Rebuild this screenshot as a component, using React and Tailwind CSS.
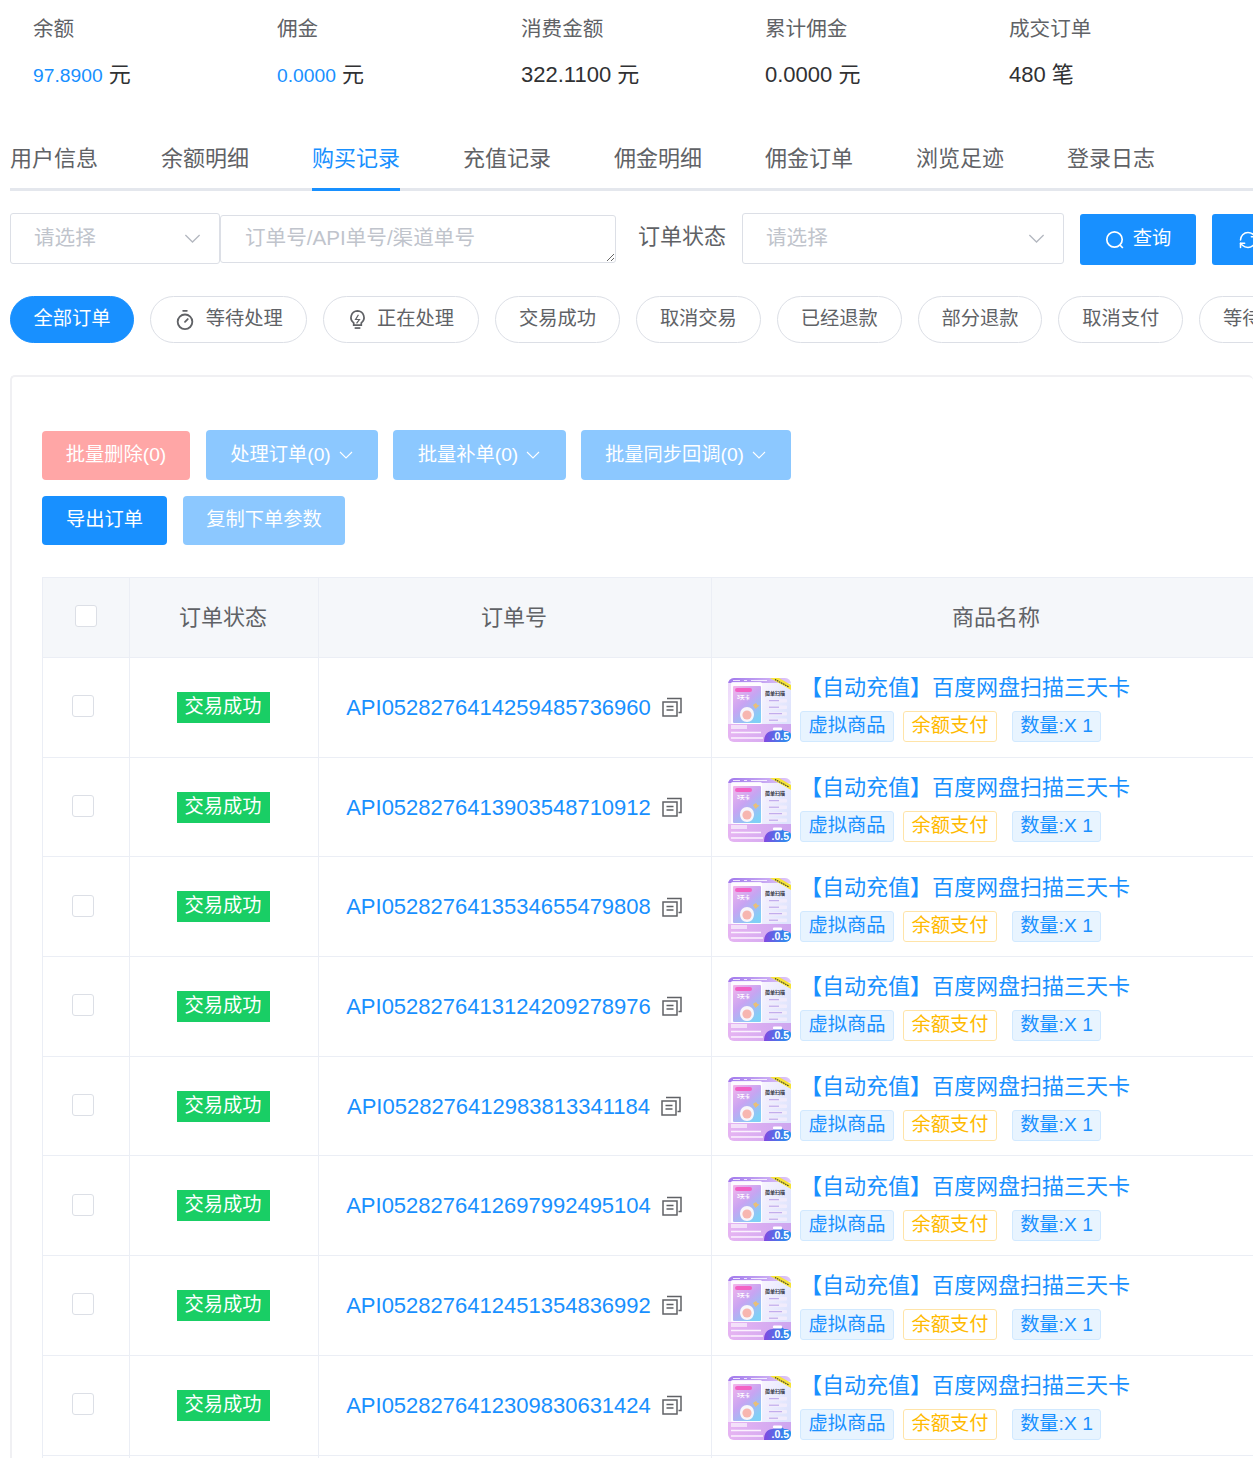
import { Timer, RefreshCw } from "lucide-react";

const stats = [
  { label: "余额", value: "97.8900", unit: "元", blue: true },
  { label: "佣金", value: "0.0000", unit: "元", blue: true },
  { label: "消费金额", value: "322.1100", unit: "元" },
  { label: "累计佣金", value: "0.0000", unit: "元" },
  { label: "成交订单", value: "480", unit: "笔" },
];

const tabs = ["用户信息", "余额明细", "购买记录", "充值记录", "佣金明细", "佣金订单", "浏览足迹", "登录日志"];

const pills = [
  { name: "全部订单", w: "w-[124px]", active: true },
  { name: "等待处理", w: "w-[156.6px]", icon: "timer" },
  { name: "正在处理", w: "w-[156.6px]", icon: "bulb" },
  { name: "交易成功", w: "w-[124.8px]" },
  { name: "取消交易", w: "w-[124.8px]" },
  { name: "已经退款", w: "w-[124.8px]" },
  { name: "部分退款", w: "w-[124.8px]" },
  { name: "取消支付", w: "w-[124.8px]" },
  { name: "等待支付", w: "w-[124.8px]" },
];

const orders = [
  "API0528276414259485736960",
  "API0528276413903548710912",
  "API0528276413534655479808",
  "API0528276413124209278976",
  "API0528276412983813341184",
  "API0528276412697992495104",
  "API0528276412451354836992",
  "API0528276412309830631424",
];

function Chevron({ className }) {
  return (
    <svg viewBox="0 0 16 16" fill="none" stroke="currentColor" strokeWidth="1.1" className={className}>
      <path d="M2 5l6 6 6-6" />
    </svg>
  );
}

function SelectBox({ w }) {
  return (
    <div className={`flex h-[51px] shrink-0 items-center justify-between rounded-[3px] border border-[#dcdfe6] bg-white pl-[23px] pr-[17px] text-[20.6px] text-[#c0c4cc] ${w}`}>
      <span>请选择</span>
      <Chevron className="h-[19px] w-[19px] text-[#b4b8c0]" />
    </div>
  );
}

function SearchIcon() {
  return (
    <svg viewBox="0 0 20 20" fill="none" stroke="currentColor" strokeWidth="1.7" className="h-5 w-5">
      <circle cx="9.5" cy="9.5" r="7.7" />
      <path d="M15 15l2.8 3" />
    </svg>
  );
}

function BulbIcon() {
  return (
    <svg viewBox="0 0 20 22" fill="none" stroke="#606266" strokeWidth="1.8" className="h-[21px] w-[19px]">
      <path d="M10 2a7 7 0 0 0-4 12.6V17h8v-2.4A7 7 0 0 0 10 2z" />
      <path d="M7 20h6" />
      <path d="M11 6l-3 5h4l-3 4" strokeWidth="1.3" />
    </svg>
  );
}

function CopyIcon() {
  return (
    <svg viewBox="0 0 20 20" fill="none" stroke="#606266" strokeWidth="1.5" className="h-5 w-5 shrink-0">
      <path d="M5 1.5h14v14h-2.5" />
      <rect x="1" y="5" width="14" height="14" />
      <path d="M4.5 9.5h7M4.5 13h7" />
    </svg>
  );
}

// 商品缩略图
function Thumb({ uid }) {
  return (
    <svg viewBox="0 0 63 64" className="h-16 w-[63px] shrink-0 rounded-[6px]">
      <defs>
        <linearGradient id={`bg${uid}`} x1="0" y1="0" x2="1" y2="0.4">
          <stop offset="0" stopColor="#ecd6fa" />
          <stop offset="0.5" stopColor="#f8f4fe" />
          <stop offset="1" stopColor="#dfe4fd" />
        </linearGradient>
        <linearGradient id={`top${uid}`} x1="0" y1="0" x2="1" y2="0">
          <stop offset="0" stopColor="#a078ec" />
          <stop offset="1" stopColor="#e2c8f8" />
        </linearGradient>
        <linearGradient id={`card${uid}`} x1="0" y1="0" x2="0.7" y2="1">
          <stop offset="0" stopColor="#f4b4ea" />
          <stop offset="0.5" stopColor="#c8a4f2" />
          <stop offset="1" stopColor="#7fd0f6" />
        </linearGradient>
        <linearGradient id={`foot${uid}`} x1="0" y1="0" x2="1" y2="0">
          <stop offset="0" stopColor="#e6b4f2" />
          <stop offset="1" stopColor="#cda6f0" />
        </linearGradient>
        <linearGradient id={`price${uid}`} x1="0" y1="0" x2="1" y2="0">
          <stop offset="0" stopColor="#8248e0" />
          <stop offset="1" stopColor="#1c9af0" />
        </linearGradient>
      </defs>
      <rect width="63" height="64" fill={`url(#bg${uid})`} />
      <rect width="63" height="5" fill={`url(#top${uid})`} />
      <path d="M5 2.5h7M16 2.5h3M23 2.5h16" stroke="#fff" strokeWidth="1" opacity="0.8" />
      <path d="M42 0h9l12 7v5z" fill="#f6e437" />
      <path d="M47 1.5l14 7.5" stroke="#333" strokeWidth="1.1" strokeDasharray="1.5 0.8" />
      <rect x="3" y="4" width="31" height="42" rx="1.5" fill="#fff" opacity="0.85" />
      <rect x="5" y="8" width="28" height="37" rx="1" fill={`url(#card${uid})`} />
      <rect x="7" y="10" width="17" height="4" rx="2" fill="#f261c4" />
      <text x="9" y="21" fontSize="5" fontWeight="700" fill="#fff">3天卡</text>
      <path d="M12 36a7 7 0 0 1 14 0c0 5-3 8-7 8s-7-3-7-8z" fill="#f7f6fb" />
      <circle cx="19" cy="37" r="4.6" fill="#f7b6b0" />
      <path d="M25 27l3-2 1.5 2 2 .5-2.5 2-1.5 1.5z" fill="#e8bf78" />
      <text x="37" y="17" fontSize="5" fontWeight="700" fill="#2e2e3a">简单扫描</text>
      <rect x="38" y="21" width="21" height="3.5" rx="1" fill="#f1ecfc" />
      <rect x="38" y="27.5" width="21" height="3.5" rx="1" fill="#f1ecfc" />
      <rect x="38" y="34" width="21" height="3.5" rx="1" fill="#f1ecfc" />
      <rect x="38" y="40.5" width="21" height="3.5" rx="1" fill="#f1ecfc" />
      <path d="M41 22.7h10M41 29.2h10M41 35.7h13M41 42.2h9" stroke="#a78ae4" strokeWidth="0.8" />
      <rect x="0" y="46" width="63" height="18" fill={`url(#foot${uid})`} />
      <rect x="3" y="47" width="16" height="4" fill="#fff" opacity="0.6" />
      <path d="M3 54.5h30M3 60h32" stroke="#fbf2fe" strokeWidth="1.6" />
      <path d="M36 64c0-7 3-11 9-11 2-3 9-3 11 0 4 0 7 1 7 4v7z" fill={`url(#price${uid})`} />
      <rect x="45" y="49.5" width="9" height="3" rx="1" fill="#fff" />
      <text x="43.5" y="62" fontSize="10.5" fontWeight="700" fill="#fff">.0.5</text>
    </svg>
  );
}

function Row({ id }) {
  return (
    <div className="flex h-[99.7px] border-b border-[#ebeef5]">
      <div className="flex w-[87px] shrink-0 items-center justify-center border-r border-[#ebeef5] pr-[6px]">
        <span className="mb-[2px] h-[22px] w-[22px] rounded-[3px] border border-[#dcdfe6] bg-white" />
      </div>
      <div className="flex w-[189px] shrink-0 items-center justify-center border-r border-[#ebeef5] pr-[2px]">
        <span className="flex h-[31px] w-[93px] items-center justify-center bg-[#19ce65] text-[19.25px] text-white">交易成功</span>
      </div>
      <div className="flex w-[393px] shrink-0 items-center justify-center gap-[11px] border-r border-[#ebeef5] pr-[2px] text-[22px] text-[#1890ff]">
        <span>{id}</span>
        <CopyIcon />
      </div>
      <div className="flex flex-1 items-center gap-[9px] pl-4 pt-[6px]">
        <Thumb uid={id} />
        <div className="flex flex-col gap-[13px]">
          <div className="text-[22px] leading-[20px] text-[#1890ff]">【自动充值】百度网盘扫描三天卡</div>
          <div className="flex text-[19.25px]">
            <span className="flex h-[31px] w-[94px] items-center justify-center rounded-[3px] border border-[#d1e9ff] bg-[#e8f4ff] text-[#1890ff]">虚拟商品</span>
            <span className="ml-[9px] flex h-[31px] w-[94px] items-center justify-center rounded-[3px] border border-[#ffe4a8] bg-white text-[#ffba00]">余额支付</span>
            <span className="ml-[15px] flex h-[31px] w-[89px] items-center justify-center rounded-[3px] border border-[#d1e9ff] bg-[#e8f4ff] text-[#1890ff]">数量:X 1</span>
          </div>
        </div>
      </div>
    </div>
  );
}

export default function App() {
  return (
    <div className="h-[1458px] w-[1253px] overflow-hidden bg-white font-['Liberation_Sans','Noto_Sans_CJK_SC',sans-serif]">
      {/* 顶部统计 */}
      <div className="flex pl-[33px] pt-[14px]">
        {stats.map((s) => (
          <div key={s.label} className="w-[244px]">
            <div className="text-[20.6px] leading-[29px] text-[#606266]">{s.label}</div>
            <div className="mt-[17px] text-[22px] leading-[30px] text-[#303133]">
              <span className={s.blue ? "text-[19.25px] text-[#1890ff]" : ""}>{s.value}</span> {s.unit}
            </div>
          </div>
        ))}
      </div>

      {/* 标签页 */}
      <div className="ml-[10px] mt-[53px] flex h-[47px] gap-[63px] border-b-[3px] border-[#e4e7ed]">
        {tabs.map((t, i) => (
          <div
            key={t}
            className={`h-[47px] text-[22px] leading-[30px] ${i === 2 ? "border-b-[3px] border-[#1890ff] text-[#1890ff]" : "text-[#606266]"}`}
          >
            {t}
          </div>
        ))}
      </div>

      {/* 筛选 */}
      <div className="ml-[10px] mt-[22px] flex h-[51px] items-start">
        <SelectBox w="w-[210px]" />
        <textarea
          placeholder="订单号/API单号/渠道单号"
          className="mt-[2px] h-[48px] w-[396px] shrink-0 rounded-[3px] border border-[#dcdfe6] px-6 py-[7px] text-[20.6px] leading-[30px] outline-none placeholder:text-[#c0c4cc]"
        />
        <div className="ml-[22px] w-[104px] shrink-0 text-[22px] leading-[48px] text-[#606266]">订单状态</div>
        <SelectBox w="w-[322px]" />
        <button className="ml-4 mt-[1px] flex h-[51px] w-[116px] shrink-0 items-center justify-center gap-[8px] rounded-[3px] bg-[#1890ff] text-[19.25px] text-white">
          <SearchIcon />
          查询
        </button>
        <button className="ml-4 mt-[1px] flex h-[51px] w-[116px] shrink-0 items-center justify-start gap-[8px] rounded-[3px] bg-[#1890ff] pl-[26px] text-[19.25px] text-white">
          <RefreshCw size={20} strokeWidth={1.8} className="shrink-0" />
          重置
        </button>
      </div>

      {/* 状态胶囊 */}
      <div className="ml-[10px] mt-[32px] flex gap-[16px]">
        {pills.map((p) => (
          <div
            key={p.name}
            className={`flex h-[47px] shrink-0 items-center justify-center gap-[10px] rounded-full border text-[19.25px] ${p.w} ${
              p.active ? "border-[#1890ff] bg-[#1890ff] text-white" : "border-[#dcdfe6] bg-white text-[#606266]"
            }`}
          >
            {p.icon === "timer" && <Timer size={22} strokeWidth={2} />}
            {p.icon === "bulb" && <BulbIcon />}
            {p.name}
          </div>
        ))}
      </div>

      {/* 主卡片 */}
      <div className="ml-[10px] mt-[32px] rounded-[5px] border-l-2 border-t-2 border-[#f0f0f3] pl-[30px] pt-[53px]">
        <div className="flex items-start text-[19.25px] text-white">
          <button className="mt-[1px] h-[49px] w-[148px] rounded-[4px] bg-[#ffa6a6]">批量删除(0)</button>
          <button className="ml-4 flex h-[50px] w-[172px] items-center justify-center gap-[7px] rounded-[4px] bg-[#8cc8ff]">
            处理订单(0) <Chevron className="h-4 w-4" />
          </button>
          <button className="ml-[15px] flex h-[50px] w-[173px] items-center justify-center gap-[7px] rounded-[4px] bg-[#8cc8ff]">
            批量补单(0) <Chevron className="h-4 w-4" />
          </button>
          <button className="ml-[15px] flex h-[50px] w-[210px] items-center justify-center gap-[7px] rounded-[4px] bg-[#8cc8ff]">
            批量同步回调(0) <Chevron className="h-4 w-4" />
          </button>
        </div>
        <div className="mt-4 flex text-[19.25px] text-white">
          <button className="h-[49px] w-[125px] rounded-[4px] bg-[#1890ff]">导出订单</button>
          <button className="ml-4 h-[49px] w-[162px] rounded-[4px] bg-[#8cc8ff]">复制下单参数</button>
        </div>

        {/* 表格 */}
        <div className="mt-8 border-l border-t border-[#ebeef5]">
          <div className="flex h-[80px] border-b border-[#ebeef5] bg-[#f5f7fa] text-[22px] text-[#606266]">
            <div className="flex w-[87px] shrink-0 items-center justify-center border-r border-[#ebeef5]">
              <span className="mb-[4px] h-[22px] w-[22px] rounded-[3px] border border-[#dcdfe6] bg-white" />
            </div>
            <div className="flex w-[189px] shrink-0 items-center justify-center border-r border-[#ebeef5] pr-[2px]">订单状态</div>
            <div className="flex w-[393px] shrink-0 items-center justify-center border-r border-[#ebeef5] pr-[2px]">订单号</div>
            <div className="flex w-[568px] shrink-0 items-center justify-center">商品名称</div>
          </div>
          {orders.map((id) => (
            <Row key={id} id={id} />
          ))}
          {/* 下方还有行，被窗口裁掉 */}
          <div className="flex h-10">
            <div className="w-[87px] shrink-0 border-r border-[#ebeef5]" />
            <div className="w-[189px] shrink-0 border-r border-[#ebeef5]" />
            <div className="w-[393px] shrink-0 border-r border-[#ebeef5]" />
          </div>
        </div>
      </div>
    </div>
  );
}
